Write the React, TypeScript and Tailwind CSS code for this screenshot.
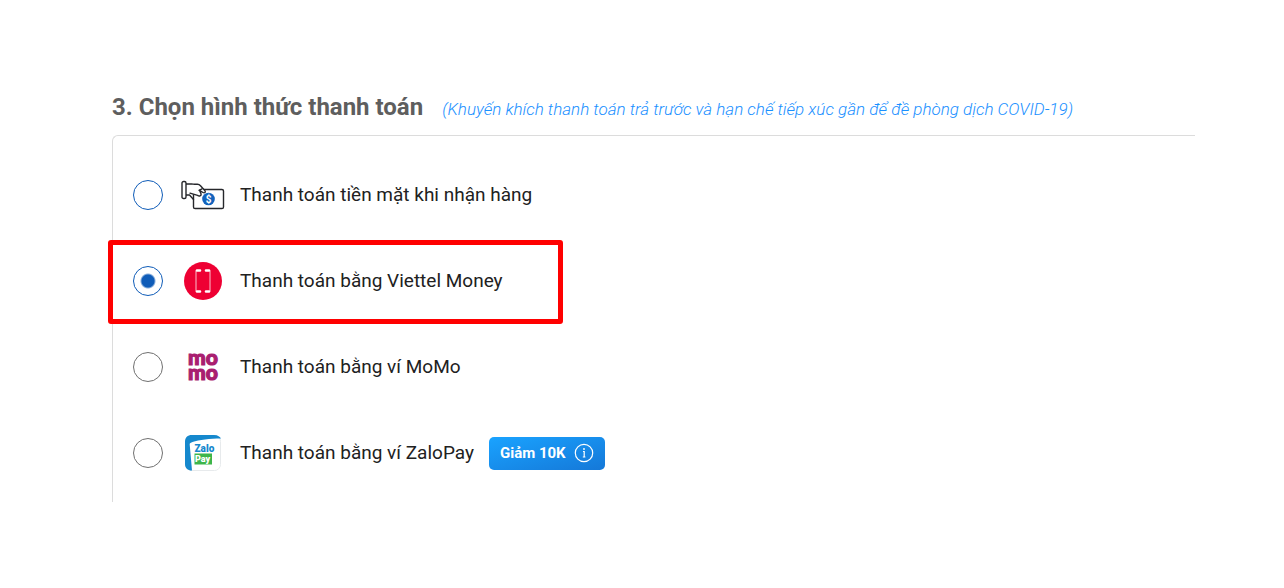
import { useState } from 'react';

const methods = [
  { id: 'cash', label: 'Thanh toán tiền mặt khi nhận hàng', icon: CashIcon, ring: 'border-[#0f5cb8]' },
  { id: 'viettel', label: 'Thanh toán bằng Viettel Money', icon: ViettelIcon, ring: 'border-[#0f5cb8]', highlighted: true },
  { id: 'momo', label: 'Thanh toán bằng ví MoMo', icon: MomoIcon, ring: 'border-[#707070]' },
  { id: 'zalopay', label: 'Thanh toán bằng ví ZaloPay', icon: ZaloPayIcon, ring: 'border-[#707070]', promo: 'Giảm 10K' },
];

export default function App() {
  const [selected, setSelected] = useState('viettel');

  return (
    <main className="bg-white pt-[89px] pl-28 pr-[89px] pb-20 font-['Roboto',sans-serif] text-[#212121]">
      <header className="flex items-baseline gap-[19px] h-[46px]">
        <h1 className="text-[24px] leading-9 font-bold text-[#5e5e5e] whitespace-nowrap">3. Chọn hình thức thanh toán</h1>
        <p className="text-[17px] leading-6 font-light italic text-[#1a90ff] whitespace-nowrap">
          (Khuyến khích thanh toán trả trước và hạn chế tiếp xúc gần để đề phòng dịch COVID-19)
        </p>
      </header>

      <div role="radiogroup" aria-label="Hình thức thanh toán" className="border-t border-l border-[#dcdcdc] rounded-tl-md pt-4 pb-1.5">
        {methods.map(({ id, label, icon: Icon, ring, highlighted, promo }) => (
          <div key={id} className="relative flex items-center h-[86px] pl-5">
            <label className="flex items-center cursor-pointer">
              <input
                type="radio"
                name="payment"
                value={id}
                checked={selected === id}
                onChange={() => setSelected(id)}
                className={`appearance-none shrink-0 size-[30px] rounded-full border bg-white checked:bg-[radial-gradient(circle,#0f5cb8_6px,transparent_8px)] ${ring}`}
              />
              <span className="flex justify-center w-11 ml-[18px] mr-[15px]">
                <Icon />
              </span>
              <span className="text-[19px] leading-6 whitespace-nowrap">{label}</span>
            </label>
            {promo && (
              <button type="button" className="flex items-center gap-2 h-[33px] ml-[15px] px-[11px] rounded-[5px] bg-linear-to-br from-[#1aa3ff] to-[#1578d8] text-[15px] font-bold text-white whitespace-nowrap">
                {promo}
                <InfoIcon />
              </button>
            )}
            {highlighted && (
              <span className="absolute top-0.5 bottom-0 -left-[5px] w-[455px] border-5 border-[#ff0000] rounded-[3px] pointer-events-none" />
            )}
          </div>
        ))}
      </div>
    </main>
  );
}

function CashIcon() {
  return (
    <svg width="44" height="30" viewBox="0 0 44 30" fill="none" stroke="#26272b" strokeWidth="1.4" strokeLinecap="round" strokeLinejoin="round" aria-hidden="true">
      <rect x="12.5" y="9.5" width="30" height="19" rx="1.6" fill="#fff" />
      <path d="M5 4h5.5c1.2 0 2 .3 3 .3h3c1.5 0 2.300.7 3 1.5l4.500 5c1 1.500-.5 2.600-2 1.700l-3.500-2.200 1.600 3.700c.2 2-1.800 2.700-3.500 1.400L9 13.200M5 15h3.500l4 4.500" fill="#fff" />
      <path d="M18 10.300l3-1.500" />
      <rect x="1" y="1.5" width="4" height="17" rx="1.6" fill="#fff" />
      <circle cx="27.5" cy="19" r="6.3" fill="#1263bd" stroke="none" />
      <text x="27.5" y="22.6" textAnchor="middle" fill="#fff" stroke="none" className="font-['Roboto',sans-serif] text-[10px] font-bold">$</text>
    </svg>
  );
}

function ViettelIcon() {
  return (
    <svg width="38" height="38" viewBox="0 0 38 38" fill="none" aria-hidden="true">
      <circle cx="19" cy="19" r="19" fill="#ee0033" />
      <path d="M16 8.5h-4v21H16M22 8.5h4v21h-4" stroke="#fff" strokeOpacity=".75" strokeWidth="1" strokeLinejoin="round" />
      <path d="M13 8.500h3M22 8.500h3M13 29.500h3M22 29.500h3" stroke="#fff" strokeWidth="2.6" strokeLinecap="round" />
    </svg>
  );
}

function MomoIcon() {
  return (
    <svg width="30" height="30" viewBox="0 0 30 30" fill="#a91e70" stroke="#a91e70" strokeWidth="1.2" overflow="visible" aria-hidden="true" className="font-['Lato',sans-serif] text-[21px] font-black">
      <text x="0" y="13">mo</text>
      <text x="0" y="28">mo</text>
    </svg>
  );
}

function ZaloPayIcon() {
  return (
    <svg width="36" height="36" viewBox="0 0 36 36" aria-hidden="true" className="font-['Roboto',sans-serif] font-black">
      <rect x=".5" y=".5" width="35" height="35" rx="6" fill="#fff" stroke="#e7eaec" />
      <path d="M7 0h22c4 0 6 2 7 3.5C25 3.500 14 5 7.500 7c-1.500.5-3 1-2.800 2.500L7 35.500C2.500 35.500 0 33 0 29V7c0-4.500 2.500-7 7-7z" fill="#1588cd" />
      <text x="9.5" y="17" fill="#1588cd" className="text-[10px]">Zalo</text>
      <rect x="9.5" y="18.5" width="17.5" height="11" fill="#3db54a" />
      <text x="10" y="27" fill="#fff" className="text-[9px]">Pay</text>
    </svg>
  );
}

function InfoIcon() {
  return (
    <svg width="20" height="20" viewBox="0 0 20 20" fill="none" stroke="#fff" strokeWidth="1.2" aria-hidden="true">
      <circle cx="10" cy="10" r="8.7" />
      <path d="M9 8.500h1.200v5.500M8.800 14h2.600" />
      <circle cx="10" cy="6" r=".9" fill="#fff" stroke="none" />
    </svg>
  );
}
